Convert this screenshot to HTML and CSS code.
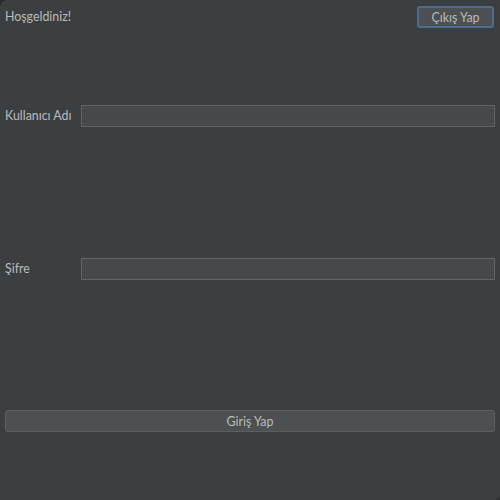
FILE: index.html
```html
<!DOCTYPE html>
<html lang="tr">
<head>
<meta charset="utf-8">
<title>Giriş</title>
<link rel="stylesheet" href="styles.css">
</head>
<body>
<div class="window">
  <div class="header">
    <span class="label">Hoşgeldiniz!</span>
    <button class="btn btn-exit">Çıkış Yap</button>
  </div>
  <div class="row row-user">
    <label class="label field-label">Kullanıcı Adı</label>
    <div class="field"></div>
  </div>
  <div class="row row-pass">
    <label class="label field-label">Şifre</label>
    <div class="field"></div>
  </div>
  <button class="btn btn-login">Giriş Yap</button>
</div>
</body>
</html>
```
FILE: styles.css
```css
html, body {
  margin: 0;
  padding: 0;
  background: #3c3f41;
  width: 500px;
  height: 500px;
  overflow: hidden;
}
.window {
  position: relative;
  box-sizing: border-box;
  width: 500px;
  height: 500px;
  padding: 6px 5px 0 5px;
  display: flex;
  flex-direction: column;
  font-family: Lato, "Open Sans", sans-serif;
  font-size: 12.4px;
  color: #bbbbbb;
}
.window::before {
  content: "";
  position: absolute;
  left: 0;
  top: 0;
  width: 6px;
  height: 6px;
  background: radial-gradient(circle at 6px 6px, transparent 5px, #2b2b2b 6px);
}
.window::after {
  content: "";
  position: absolute;
  right: 0;
  bottom: 0;
  width: 6px;
  height: 6px;
  background: linear-gradient(135deg, transparent 60%, #2e3032 60%);
}
.header {
  display: flex;
  justify-content: space-between;
  align-items: center;
  height: 22px;
}
.label {
  line-height: 22px;
}
.btn {
  font-family: inherit;
  font-size: 12.4px;
  color: #bbbbbb;
  background: #4c5052;
  border: 1px solid #5e6060;
  border-radius: 3px;
  height: 22px;
  padding: 0;
  box-sizing: border-box;
}
.btn-exit {
  width: 77px;
  margin-right: 1px;
  border-color: #4a6c95;
  border-width: 2px;
}
.row {
  display: flex;
  align-items: center;
  height: 22px;
}
.row-user { margin-top: 77px; }
.row-pass { margin-top: 131px; }
.field-label {
  width: 76px;
  flex: none;
}
.field {
  flex: 1;
  height: 22px;
  box-sizing: border-box;
  background: #45494a;
  border: 1px solid #646464;
}
.btn-login {
  margin-top: 130px;
  width: 490px;
}
```
